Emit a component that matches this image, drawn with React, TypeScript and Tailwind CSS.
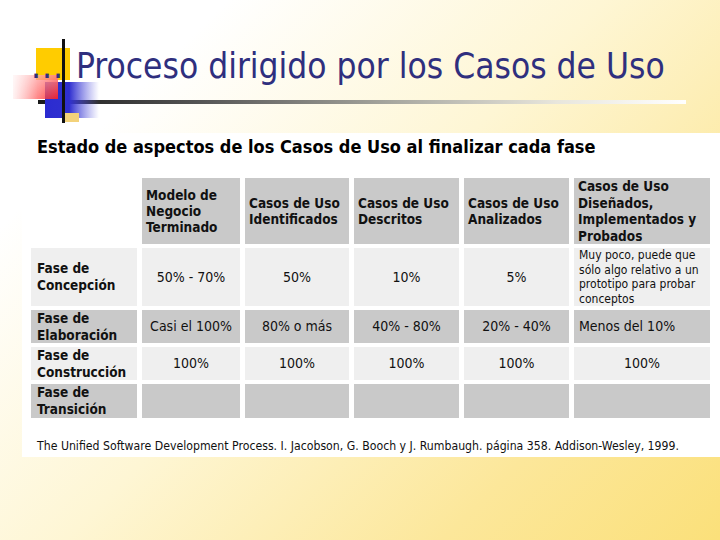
import type { ReactNode } from 'react';

const FONT = { fontFamily: '"DejaVu Sans Condensed", "DejaVu Sans", sans-serif', fontStretch: 'condensed' as const };

const headers: ReactNode[] = [
  <>Modelo de<br />Negocio<br />Terminado</>,
  <>Casos de Uso<br />Identificados</>,
  <>Casos de Uso<br />Descritos</>,
  <>Casos de Uso<br />Analizados</>,
  <>Casos de Uso<br />Diseñados,<br />Implementados y<br />Probados</>,
];

interface Row {
  label: string;
  dark: boolean;
  height: string;
  cells: string[];
}

const rows: Row[] = [
  { label: 'Concepción', dark: false, height: 'h-[58px]', cells: ['50% - 70%', '50%', '10%', '5%', ''] },
  { label: 'Elaboración', dark: true, height: 'h-[33px]', cells: ['Casi el 100%', '80% o más', '40% - 80%', '20% - 40%', 'Menos del 10%'] },
  { label: 'Construcción', dark: false, height: 'h-[33px]', cells: ['100%', '100%', '100%', '100%', '100%'] },
  { label: 'Transición', dark: true, height: 'h-[34px]', cells: ['', '', '', '', ''] },
];

function Logo() {
  return (
    <svg className="absolute left-0 top-0" width="110" height="130" viewBox="0 0 110 130">
      <defs>
        <linearGradient id="red" x1="0" y1="0" x2="1" y2="0">
          <stop offset="0" stopColor="#ff8080" stopOpacity="0.1" />
          <stop offset="0.55" stopColor="#ff4a4a" stopOpacity="0.75" />
          <stop offset="1" stopColor="#ff2020" />
        </linearGradient>
        <linearGradient id="redv" x1="0" y1="0" x2="0" y2="1">
          <stop offset="0" stopColor="#ffffff" stopOpacity="0.45" />
          <stop offset="1" stopColor="#ffffff" stopOpacity="0" />
        </linearGradient>
        <linearGradient id="blue" x1="0" y1="0" x2="1" y2="0">
          <stop offset="0" stopColor="#2b2bd0" />
          <stop offset="0.45" stopColor="#3030d0" />
          <stop offset="1" stopColor="#6060e0" stopOpacity="0" />
        </linearGradient>
      </defs>
      <rect x="36" y="48" width="34" height="32" fill="#ffcc00" />
      <rect x="45" y="82" width="54" height="36" fill="url(#blue)" />
      <rect x="63" y="113" width="16" height="9" fill="#f3d27a" />
      <g opacity="0.9">
        <rect x="13" y="75" width="45" height="24" fill="url(#red)" />
        <rect x="13" y="75" width="45" height="24" fill="url(#redv)" />
      </g>
      <rect x="62" y="39" width="3" height="84" fill="#111111" />
    </svg>
  );
}

export default function App() {
  return (
    <div
      className="w-[720px] h-[540px] overflow-hidden bg-[linear-gradient(135deg,#ffffff_18%,#fef6d4_48%,#fce79a_78%,#fbe07a_100%)]"
      style={FONT}
    >
      {/* Title */}
      <div className="relative h-[133px]">
        <Logo />
        <div className="relative flex items-baseline pl-[31px] pt-[49px] text-[35px] leading-none text-[#2f2f7e]">
          <span className="tracking-[1px]">...</span>
          <span className="ml-[12px]">Proceso dirigido por los Casos de Uso</span>
        </div>
        <div className="ml-[38px] mt-[16px] h-[4px] w-[648px] bg-[linear-gradient(90deg,#1a1a1a_0%,#555555_25%,#a8a8a0_55%,#e8e6dc_80%,#ffffff_100%)]" />
      </div>

      {/* Panel */}
      <div className="ml-[22px] h-[324px] bg-white pl-[9px] pt-[3px]">
        <h2 className="pl-[6px] text-[18px] font-bold leading-[22px] text-black">
          Estado de aspectos de los Casos de Uso al finalizar cada fase
        </h2>

        <div className="mt-[20px] grid grid-cols-[106px_98px_104px_105px_105px_136px] gap-x-[5px] gap-y-[4px] text-[14px] text-[#111]">
          <div className="h-[66px]" />
          {headers.map((h, i) => (
            <div
              key={i}
              className={`flex h-[66px] items-center bg-[#c9c9c9] px-[4px] text-[13.5px] font-bold ${i === 4 ? 'leading-[16.5px]' : 'leading-[16px]'}`}
            >
              <div>{h}</div>
            </div>
          ))}

          {rows.map((r) => (
            <Row key={r.label} row={r} />
          ))}
        </div>

        <p className="mt-[20px] pl-[6px] text-[12.2px] leading-[16px] text-[#111]">
          The Unified Software Development Process. I. Jacobson, G. Booch y J. Rumbaugh. página 358. Addison-Wesley, 1999.
        </p>
      </div>
    </div>
  );
}

function Row({ row }: { row: Row }) {
  const bg = row.dark ? 'bg-[#c9c9c9]' : 'bg-[#efefef]';
  return (
    <>
      <div className={`flex ${row.height} items-center ${bg} px-[6px] text-[13.5px] font-bold leading-[17px]`}>
        <div>
          Fase de
          <br />
          {row.label}
        </div>
      </div>
      {row.cells.map((c, i) => {
        if (i === 4 && row.label === 'Concepción') {
          return (
            <div key={i} className={`flex ${row.height} items-center ${bg} px-[5px] text-[12px] leading-[14.5px]`}>
              <div>Muy poco, puede que sólo algo relativo a un prototipo para probar conceptos</div>
            </div>
          );
        }
        const left = i === 4 && row.label === 'Elaboración';
        return (
          <div
            key={i}
            className={`flex ${row.height} items-center ${left ? 'justify-start px-[5px]' : 'justify-center'} ${bg}`}
          >
            {c}
          </div>
        );
      })}
    </>
  );
}
